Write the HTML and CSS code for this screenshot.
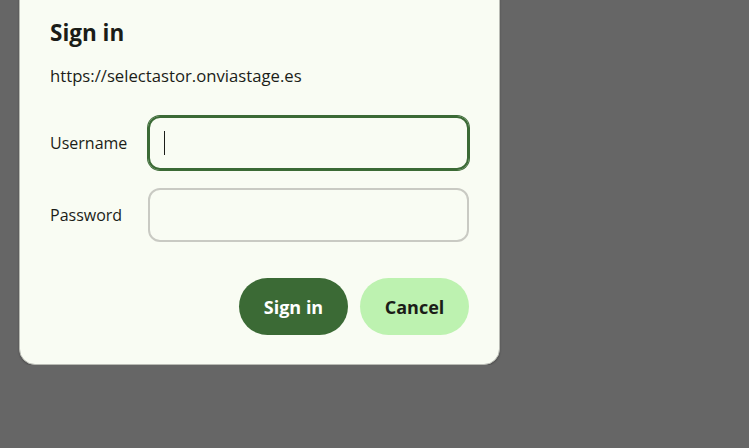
FILE: index.html
```
<!DOCTYPE html>
<html lang="en">
  <head>
    <meta charset="UTF-8" />
    <meta name="viewport" content="width=device-width, initial-scale=1.0" />
    <title>Sign in</title>
    <link rel="stylesheet" href="styles.css">
  </head>
  <body>
    <div class="dialog">
      <h2 class="title">Sign in</h2>
      <p class="origin">https://selectastor.onviastage.es</p>

      <form class="login">
        <label for="username">Username</label>
        <div class="field focused">
          <input id="username" type="text" />
        </div>

        <label for="password">Password</label>
        <div class="field">
          <input id="password" type="password" />
        </div>
      </form>

      <div class="actions">
        <button class="primary">Sign in</button>
        <button class="secondary">Cancel</button>
      </div>
    </div>
  </body>
</html>
```

FILE: styles.css
```
body {
  margin: 0;
  background-color: #666666;
  font-family: "Open Sans", "Noto Sans", sans-serif;
  color: #1b1d18;
  overflow: hidden;
}

.dialog {
  box-sizing: border-box;
  width: 481px;
  margin: -15px 0 0 19px;
  padding: 32px 30px 29px 30px;
  background-color: #f9fcf3;
  border: 1px solid #b9bbb4;
  border-radius: 0 0 16px 16px;
  box-shadow: 0 1px 2px rgba(0, 0, 0, 0.25);
}

.title {
  margin: 0;
  font-size: 22.5px;
  font-weight: 700;
  line-height: 30px;
}

.origin {
  margin: 17px 0 0;
  font-size: 16.7px;
  line-height: 22px;
}

.login {
  display: grid;
  grid-template-columns: 98px 321px;
  row-gap: 18px;
  align-items: center;
  margin-top: 29px;
}

.login label {
  font-size: 16px;
}

.field {
  position: relative;
}

.field input {
  box-sizing: border-box;
  display: block;
  width: 100%;
  height: 54px;
  padding: 0 14px;
  background: transparent;
  border: 2px solid #c9cac3;
  border-radius: 12px;
  font: inherit;
  outline: none;
}

.focused input {
  border-color: #3b6a35;
  box-shadow: 0 0 0 1px #3b6a35;
}

.focused::after {
  content: "";
  position: absolute;
  left: 16px;
  top: 15px;
  width: 1px;
  height: 24px;
  background: #1b1d18;
}

.actions {
  display: flex;
  justify-content: flex-end;
  gap: 12px;
  margin-top: 36px;
}

.actions button {
  width: 109px;
  height: 57px;
  border: none;
  border-radius: 29px;
  font-family: inherit;
  font-size: 18px;
  font-weight: 700;
  cursor: pointer;
}

.primary {
  background-color: #3b6a35;
  color: #ffffff;
}

.secondary {
  background-color: #bdf2b0;
  color: #1b1d18;
}
```
